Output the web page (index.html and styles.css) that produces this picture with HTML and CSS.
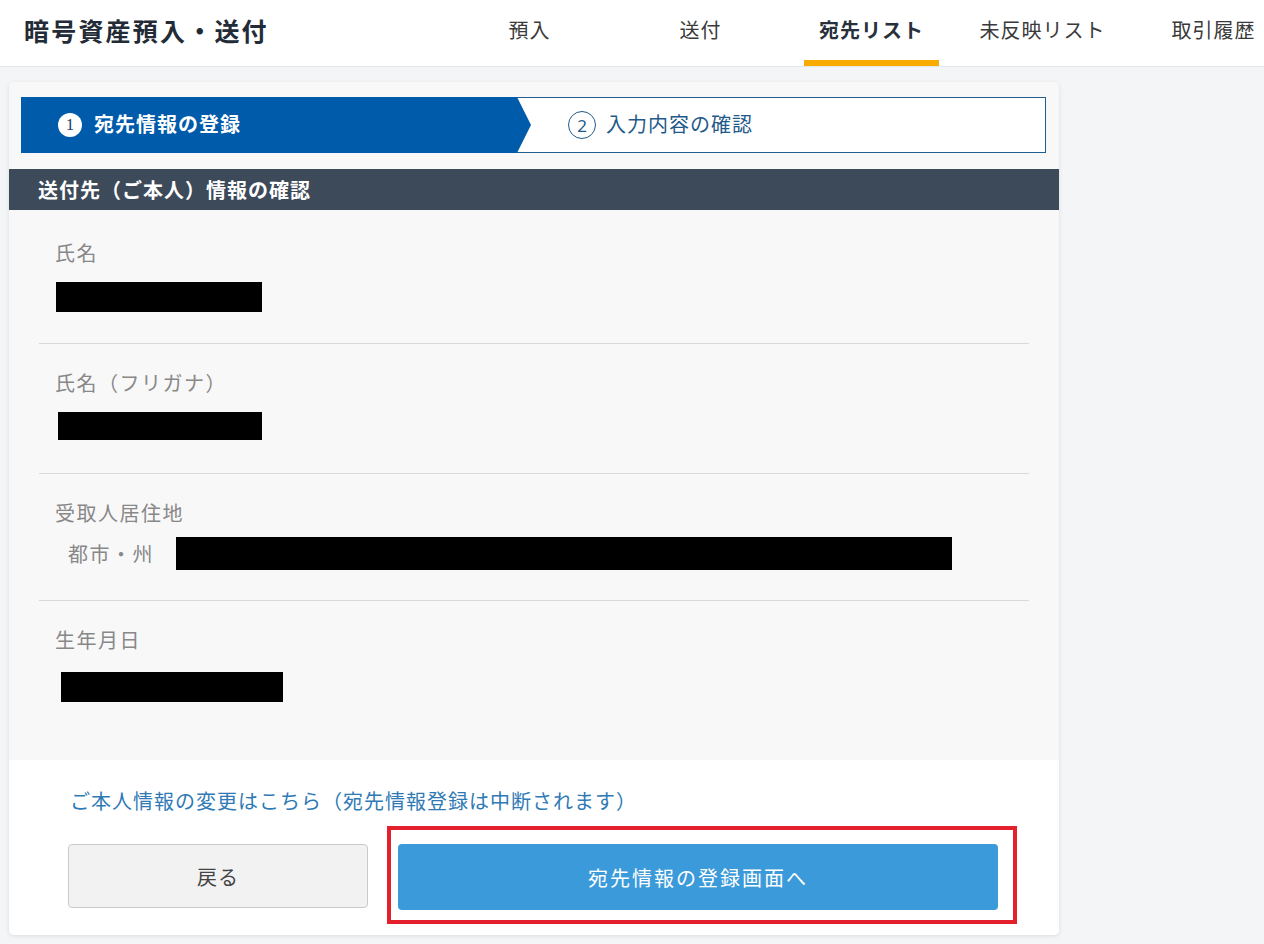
FILE: index.html
```html
<!DOCTYPE html>
<html lang="ja">
<head>
<meta charset="utf-8">
<title>暗号資産預入・送付</title>
<link rel="stylesheet" href="styles.css">
</head>
<body>
<header class="topbar">
  <h1 class="title">暗号資産預入・送付</h1>
  <nav class="tabs">
    <a class="tab">預入</a>
    <a class="tab">送付</a>
    <a class="tab active">宛先リスト</a>
    <a class="tab">未反映リスト</a>
    <a class="tab">取引履歴</a>
  </nav>
</header>
<main class="main">
  <section class="card">
    <div class="steps">
      <div class="step step-current"><span class="num num-filled">1</span><span class="step-text">宛先情報の登録</span></div>
      <div class="step step-next"><span class="num num-outline">2</span><span class="step-text">入力内容の確認</span></div>
    </div>
    <h2 class="section-head">送付先（ご本人）情報の確認</h2>
    <div class="fields">
      <div class="field first">
        <div class="label">氏名</div>
        <div class="redact r-name"></div>
      </div>
      <div class="field second">
        <div class="label">氏名（フリガナ）</div>
        <div class="redact r-kana"></div>
      </div>
      <div class="field third">
        <div class="label">受取人居住地</div>
        <div class="subrow">
          <span class="sublabel">都市・州</span>
          <div class="redact r-city"></div>
        </div>
      </div>
      <div class="field last">
        <div class="label">生年月日</div>
        <div class="redact r-dob"></div>
      </div>
    </div>
    <div class="actions">
      <a class="link">ご本人情報の変更はこちら（宛先情報登録は中断されます）</a>
      <div class="buttons">
        <button class="btn btn-back">戻る</button>
        <div class="highlight">
          <button class="btn btn-primary">宛先情報の登録画面へ</button>
        </div>
      </div>
    </div>
  </section>
</main>
</body>
</html>
```

FILE: styles.css
```css
* { box-sizing: border-box; }
html, body { margin: 0; padding: 0; }
body {
  background: #f4f5f7;
  font-family: "Noto Sans CJK JP", "Noto Sans", sans-serif;
  color: #333;
  width: 1264px;
  min-height: 944px;
  overflow: hidden;
}

.topbar {
  height: 67px;
  background: #fff;
  border-bottom: 1px solid #e4e6e9;
  display: flex;
  align-items: stretch;
  overflow: hidden;
}
.title {
  margin: 0;
  padding-left: 24px;
  width: 462px;
  flex: none;
  font-size: 25px;
  font-weight: 700;
  letter-spacing: 2.2px;
  color: #222b36;
  display: flex;
  align-items: center;
  padding-bottom: 6px;
}
.tabs {
  display: flex;
  gap: 36px;
  flex: none;
}
.tab {
  width: 135px;
  flex: none;
  display: flex;
  align-items: center;
  justify-content: center;
  font-size: 20px;
  letter-spacing: 1px;
  color: #3a3a3a;
  padding-bottom: 2px;
  border-bottom: 6px solid transparent;
  white-space: nowrap;
}
.tab.active {
  font-weight: 700;
  color: #27303b;
  border-bottom-color: #f8ab00;
}

.main {
  padding: 15px 0 0 9px;
}
.card {
  width: 1050px;
  background: #f8f8f8;
  border-radius: 5px;
  box-shadow: 0 1px 4px rgba(0, 0, 0, 0.10);
  overflow: hidden;
  padding-top: 15px;
}

.steps {
  display: flex;
  height: 56px;
  margin: 0 13px 0 12px;
}
.step {
  display: flex;
  align-items: center;
}
.step-current {
  width: 510px;
  flex: none;
  background: #005bab;
  color: #fff;
  clip-path: polygon(0 0, calc(100% - 14px) 0, 100% 50%, calc(100% - 14px) 100%, 0 100%);
  padding-left: 37px;
  position: relative;
  z-index: 1;
}
.step-next {
  flex: 1;
  margin-left: -14px;
  background: #fff;
  border: 1px solid #1f5f8f;
  border-left: none;
  padding-left: 51px;
  color: #1f5a8a;
}
.num {
  display: inline-flex;
  align-items: center;
  justify-content: center;
  border-radius: 50%;
  font-family: "Liberation Serif", serif;
  flex: none;
}
.num-filled {
  width: 24px;
  height: 24px;
  background: #fff;
  color: #1d3f6e;
  font-size: 17px;
  margin-right: 12px;
}
.num-outline {
  width: 28px;
  height: 28px;
  border: 1.5px solid #1f5a8a;
  color: #1f5a8a;
  font-family: "Noto Sans", sans-serif;
  font-size: 17px;
  margin-right: 10px;
}
.step-text {
  font-size: 20px;
  line-height: 1;
  letter-spacing: 1px;
  padding-bottom: 2px;
}
.step-current .step-text { font-weight: 700; }

.section-head {
  margin: 16px 0 0;
  height: 41px;
  background: #3d4a5a;
  color: #fff;
  font-size: 20px;
  letter-spacing: 1px;
  font-weight: 700;
  padding-left: 29px;
  display: flex;
  align-items: center;
}

.fields {
  background: #f8f8f8;
  padding: 0 30px;
}
.field {
  padding: 24px 0 31px 16px;
  border-bottom: 1px solid #d9d9d9;
}
.field.first { padding-top: 28px; }
.field.second { padding-bottom: 33px; }
.field.third { padding-bottom: 30px; }
.field.last { border-bottom: none; padding-bottom: 58px; }
.field.last .label { margin-bottom: 17px; }
.label {
  font-size: 20px;
  line-height: 30px;
  letter-spacing: 1.5px;
  color: #888;
  margin-bottom: 14px;
}
.redact {
  background: #000;
  height: 30px;
}
.r-name { width: 206px; margin-left: 1px; }
.r-kana { width: 204px; height: 28px; margin-left: 3px; }
.r-dob { width: 222px; margin-left: 6px; }
.subrow {
  display: flex;
  align-items: center;
  margin-top: -5px;
}
.sublabel {
  font-size: 20px;
  letter-spacing: 1.5px;
  color: #888;
  margin-left: 13px;
  width: 108px;
  flex: none;
}
.r-city { width: 776px; height: 33px; }

.actions {
  background: #fff;
  padding: 26px 0 11px 61px;
}
.link {
  display: block;
  font-size: 20px;
  line-height: 30px;
  color: #2f7ab5;
  letter-spacing: 1px;
}
.buttons {
  display: flex;
  align-items: flex-start;
  margin-top: 10px;
  margin-left: -2px;
  gap: 19px;
}
.btn {
  font-family: "Noto Sans CJK JP", "Noto Sans", sans-serif;
  font-size: 20px;
  border-radius: 4px;
  cursor: pointer;
}
.btn-back {
  width: 300px;
  height: 64px;
  margin-top: 18px;
  background: #f2f2f2;
  border: 1px solid #c9c9c9;
  color: #444;
  letter-spacing: 1px;
}
.highlight {
  width: 630px;
  border: 4px solid #e3202b;
  padding: 14px 15px 10px 7px;
}
.btn-primary {
  display: block;
  width: 600px;
  height: 66px;
  background: #3b9ad9;
  border: none;
  color: #fff;
  letter-spacing: 2px;
}
```
